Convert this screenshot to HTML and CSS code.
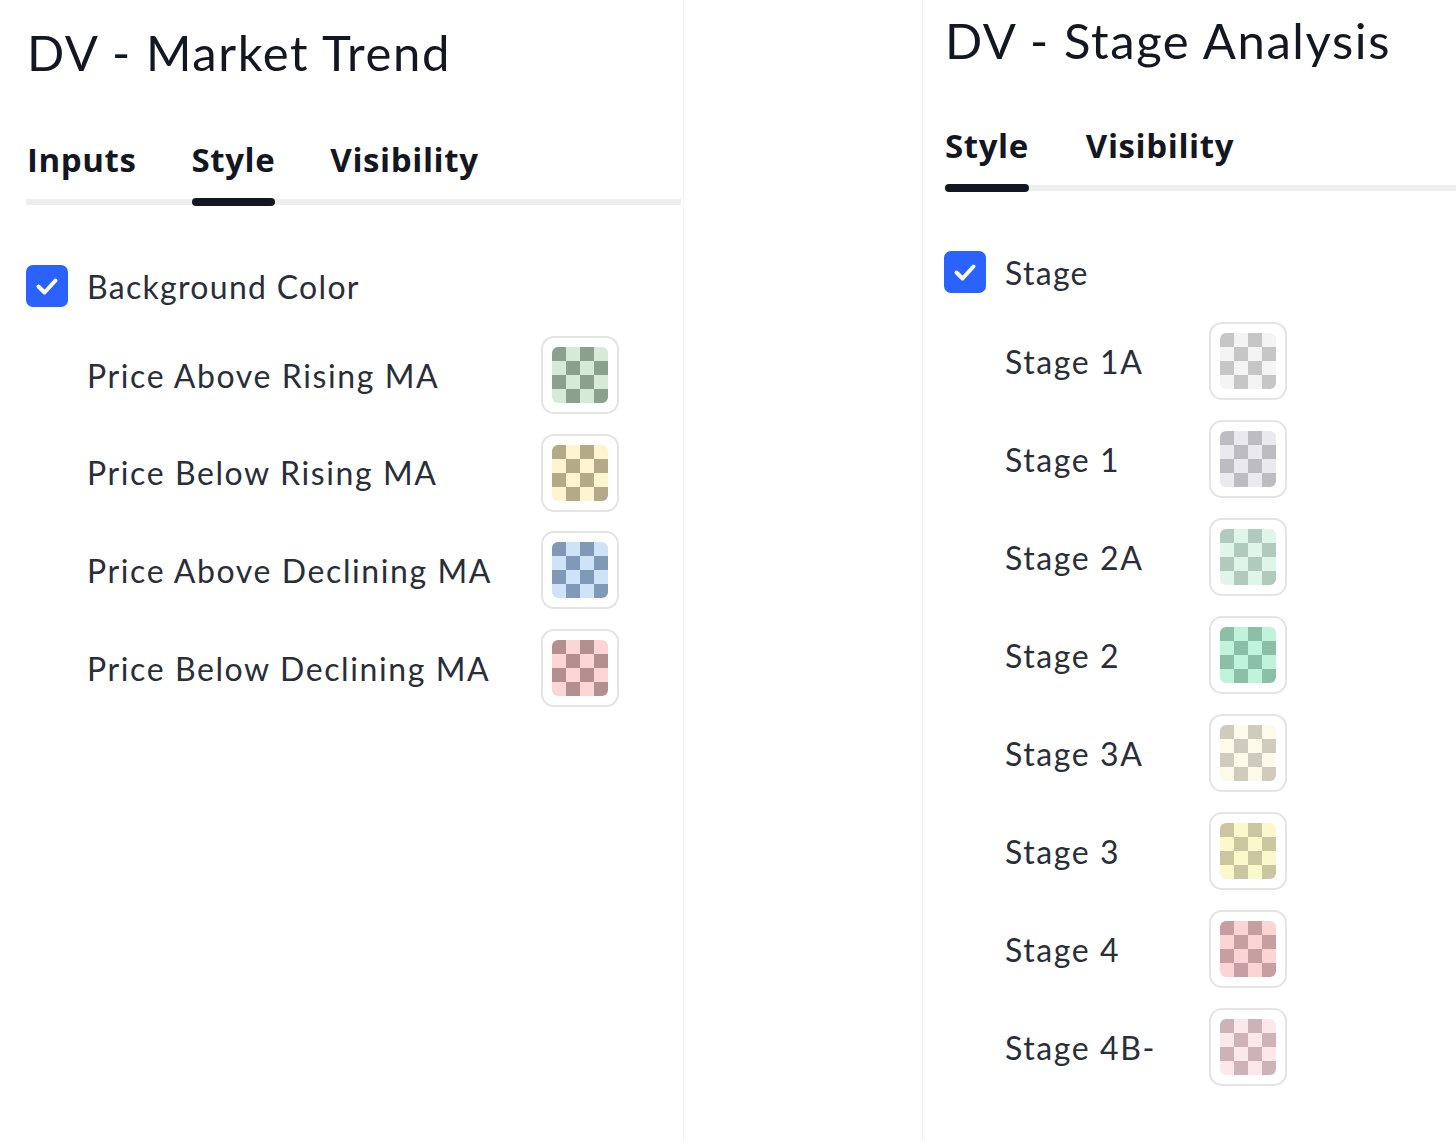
FILE: index.html
```html
<!DOCTYPE html>
<html lang="en">
<head>
<meta charset="utf-8">
<title>DV settings</title>
<link rel="stylesheet" href="styles.css">
</head>
<body>
<div class="page">
  <section class="panel panel-left">
    <h1 class="title">DV - Market Trend</h1>
    <nav class="tabs">
      <span class="tab">Inputs</span>
      <span class="tab active">Style</span>
      <span class="tab">Visibility</span>
    </nav>
    <label class="check-row">
      <span class="checkbox"><svg viewBox="0 0 42 42" width="42" height="42"><polyline points="12.5,21.5 18.5,27.5 29.5,15.5" fill="none" stroke="#fff" stroke-width="4" stroke-linecap="round" stroke-linejoin="round"/></svg></span>
      <span class="check-label">Background Color</span>
    </label>
    <div class="rows">
      <div class="row"><span class="row-label">Price Above Rising MA</span><span class="swatch"><span class="chk c-green"></span></span></div>
      <div class="row"><span class="row-label">Price Below Rising MA</span><span class="swatch"><span class="chk c-yellow"></span></span></div>
      <div class="row"><span class="row-label">Price Above Declining MA</span><span class="swatch"><span class="chk c-blue"></span></span></div>
      <div class="row"><span class="row-label">Price Below Declining MA</span><span class="swatch"><span class="chk c-red"></span></span></div>
    </div>
  </section>
  <section class="panel panel-right">
    <h1 class="title">DV - Stage Analysis</h1>
    <nav class="tabs">
      <span class="tab active">Style</span>
      <span class="tab">Visibility</span>
    </nav>
    <label class="check-row">
      <span class="checkbox"><svg viewBox="0 0 42 42" width="42" height="42"><polyline points="12.5,21.5 18.5,27.5 29.5,15.5" fill="none" stroke="#fff" stroke-width="4" stroke-linecap="round" stroke-linejoin="round"/></svg></span>
      <span class="check-label">Stage</span>
    </label>
    <div class="rows">
      <div class="row"><span class="row-label">Stage 1A</span><span class="swatch"><span class="chk c-s1a"></span></span></div>
      <div class="row"><span class="row-label">Stage 1</span><span class="swatch"><span class="chk c-s1"></span></span></div>
      <div class="row"><span class="row-label">Stage 2A</span><span class="swatch"><span class="chk c-s2a"></span></span></div>
      <div class="row"><span class="row-label">Stage 2</span><span class="swatch"><span class="chk c-s2"></span></span></div>
      <div class="row"><span class="row-label">Stage 3A</span><span class="swatch"><span class="chk c-s3a"></span></span></div>
      <div class="row"><span class="row-label">Stage 3</span><span class="swatch"><span class="chk c-s3"></span></span></div>
      <div class="row"><span class="row-label">Stage 4</span><span class="swatch"><span class="chk c-s4"></span></span></div>
      <div class="row"><span class="row-label">Stage 4B-</span><span class="swatch"><span class="chk c-s4b"></span></span></div>
    </div>
  </section>
</div>
</body>
</html>
```

FILE: styles.css
```css
* { box-sizing: border-box; }
html, body { margin: 0; padding: 0; background: #fff; }
body {
  font-family: "Lato", "Noto Sans", sans-serif;
  color: #2a2e39;
  width: 1456px;
  height: 1141px;
  overflow: hidden;
}
.page {
  display: flex;
  align-items: flex-start;
}
.panel {
  display: flex;
  flex-direction: column;
}
.panel-left {
  width: 684px;
  padding: 14px 2px 0 26px;
  border-right: 1px solid #f6f6f6;
  min-height: 1141px;
}
.panel-right {
  margin-left: 238px;
  flex: 1;
  padding: 0 0 0 21px;
  border-left: 1px solid #f4f4f4;
  min-height: 1141px;
}
.title {
  margin: 0;
  height: 80px;
  line-height: 80px;
  font-size: 49px;
  font-weight: 400;
  color: #131722;
  padding-left: 1px;
  letter-spacing: 1.6px;
  white-space: nowrap;
}
.panel-left .title { margin-top: -2px; margin-bottom: 2px; }
.tabs {
  margin-top: 46px;
  display: flex;
  gap: 57px;
  border-bottom: 6px solid #eeeeee;
  padding-left: 1px;
}
.panel-left .tabs { gap: 55px; }
.tab {
  position: relative;
  font-family: "Open Sans", "Noto Sans", sans-serif;
  font-weight: 700;
  font-size: 33px;
  line-height: 40px;
  height: 59px;
  color: #131722;
  letter-spacing: 0.6px;
}
.tab.active::after {
  content: "";
  position: absolute;
  left: 0;
  right: 0;
  bottom: -7px;
  height: 8px;
  border-radius: 4px;
  background: #131722;
}
.check-row {
  margin-top: 60px;
  display: flex;
  align-items: center;
  height: 42px;
}
.checkbox {
  width: 42px;
  height: 42px;
  border-radius: 7px;
  background: #2962ff;
  display: flex;
  flex: none;
}
.check-label {
  margin-left: 19px;
  font-size: 32px;
  color: #2a2e39;
  letter-spacing: 1.3px;
}
.rows {
  margin-top: 29px;
  display: flex;
  flex-direction: column;
  gap: 20px;
  padding-left: 61px;
}
.panel-left .rows { gap: 19.7px; }
.row {
  display: flex;
  align-items: center;
  height: 78px;
}
.row-label {
  font-size: 32px;
  color: #2a2e39;
  letter-spacing: 1.6px;
  white-space: nowrap;
}
.panel-left .row-label { width: 454px; }
.panel-right .row-label { width: 204px; }
.swatch {
  width: 78px;
  height: 78px;
  border: 2px solid #e4e4e4;
  border-radius: 13px;
  padding: 9px;
  background: #fff;
  flex: none;
}
.chk {
  display: block;
  width: 56px;
  height: 56px;
  border-radius: 6px;
  background: repeating-conic-gradient(var(--l) 0 25%, var(--d) 0 50%) 0 0 / 28px 28px;
}
.c-green  { --l: #d5ead8; --d: #8aa18e; }
.c-yellow { --l: #fdf4d0; --d: #b4aa88; }
.c-blue   { --l: #cfe3f8; --d: #8199b5; }
.c-red    { --l: #fcd5d6; --d: #b38f92; }
.c-s1a    { --l: #f4f4f4; --d: #c6c6c6; }
.c-s1     { --l: #eaeaee; --d: #bdbdc1; }
.c-s2a    { --l: #dff5ea; --d: #b0cbbd; }
.c-s2     { --l: #bff3dc; --d: #8cbfa8; }
.c-s3a    { --l: #fcfae8; --d: #d0ccbd; }
.c-s3     { --l: #fbf8cc; --d: #cac7a0; }
.c-s4     { --l: #fbd5d6; --d: #c79ea2; }
.c-s4b    { --l: #fce8ea; --d: #cdb3b8; }
```
